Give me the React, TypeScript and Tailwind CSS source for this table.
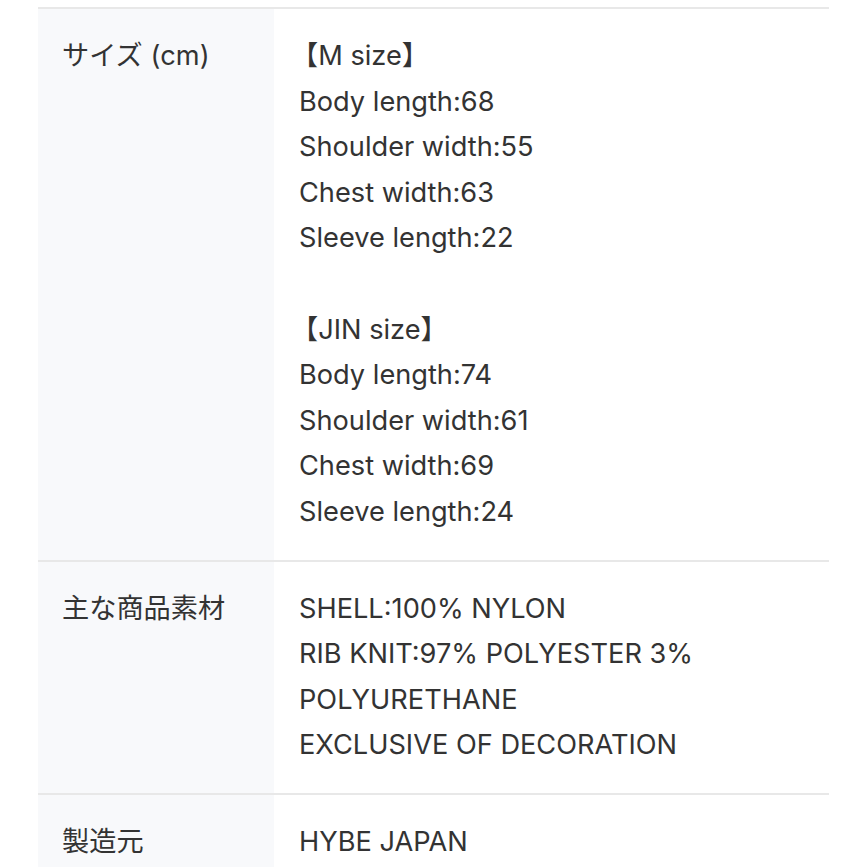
const rows: { label: string; lines: string[] }[] = [
  {
    label: 'サイズ (cm)',
    lines: [
      '【M size】',
      'Body length:68',
      'Shoulder width:55',
      'Chest width:63',
      'Sleeve length:22',
      '',
      '【JIN size】',
      'Body length:74',
      'Shoulder width:61',
      'Chest width:69',
      'Sleeve length:24',
    ],
  },
  {
    label: '主な商品素材',
    lines: ['SHELL:100% NYLON', 'RIB KNIT:97% POLYESTER 3%', 'POLYURETHANE', 'EXCLUSIVE OF DECORATION'],
  },
  { label: '製造元', lines: ['HYBE JAPAN'] },
];

export default function App() {
  return (
    <div
      className="w-[867px] h-[867px] overflow-hidden bg-white pt-[7px] px-[38px] text-[#333] text-[27.2px] leading-[45.6px]"
      style={{ fontFamily: 'Inter, "Noto Sans CJK JP", sans-serif' }}
    >
      {rows.map((row) => (
        <div key={row.label} className="flex border-t-2 border-[#e8e8e8]">
          <div className="w-[236px] shrink-0 bg-[#f8f9fb] pl-[24px] pt-[24px] pb-[25px]">{row.label}</div>
          <div className="flex-1 pl-[25px] pt-[24px] pb-[25px]">
            {row.lines.map((line, i) => (
              <div key={i} className={line.startsWith('【') ? 'h-[45.6px] whitespace-nowrap -ml-[8px]' : 'h-[45.6px] whitespace-nowrap'}>
                {line}
              </div>
            ))}
          </div>
        </div>
      ))}
    </div>
  );
}
